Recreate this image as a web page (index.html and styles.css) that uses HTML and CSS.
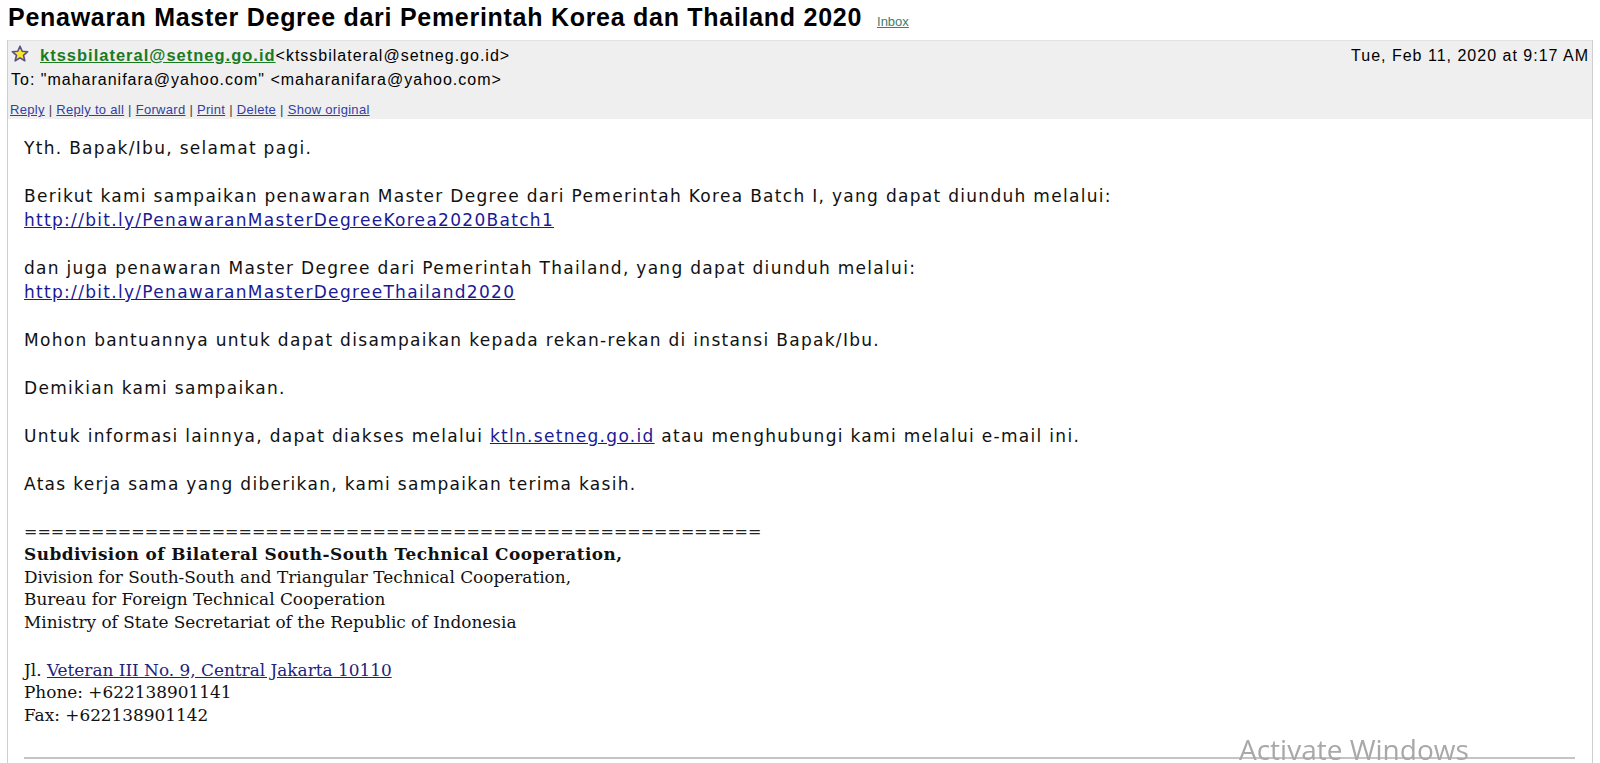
FILE: index.html
```html
<!DOCTYPE html>
<html lang="id">
<head>
<meta charset="utf-8">
<title>Penawaran Master Degree dari Pemerintah Korea dan Thailand 2020</title>
<link rel="stylesheet" href="styles.css">
</head>
<body>
<div class="page">
  <div class="subject">
    <h1 class="subject-title">Penawaran Master Degree dari Pemerintah Korea dan Thailand 2020</h1>
    <a class="label" href="#">Inbox</a>
  </div>
  <div class="message">
    <div class="msg-head">
      <div class="row-from">
        <div class="from">
          <svg class="star" viewBox="0 0 18 18" width="18" height="18" aria-hidden="true">
            <path d="M9 1.2 L11.2 6.3 L16.7 6.7 L12.5 10.3 L13.8 15.8 L9 12.9 L4.2 15.8 L5.5 10.3 L1.3 6.7 L6.8 6.3 Z" fill="#f6e632" stroke="#5a4d8c" stroke-width="1.6" stroke-linejoin="round"/>
          </svg>
          <a class="sender" href="#">ktssbilateral@setneg.go.id</a><span class="addr">&lt;ktssbilateral@setneg.go.id&gt;</span>
        </div>
        <div class="date">Tue, Feb 11, 2020 at 9:17 AM</div>
      </div>
      <div class="row-to">To: "maharanifara@yahoo.com" &lt;maharanifara@yahoo.com&gt;</div>
      <div class="actions">
        <a href="#">Reply</a> | <a href="#">Reply to all</a> | <a href="#">Forward</a> | <a href="#">Print</a> | <a href="#">Delete</a> | <a href="#">Show original</a>
      </div>
    </div>
    <div class="msg-body">
      <p>Yth. Bapak/Ibu, selamat pagi.</p>
      <p>Berikut kami sampaikan penawaran Master Degree dari Pemerintah Korea Batch I, yang dapat diunduh melalui:<br><a href="#">http://bit.ly/PenawaranMasterDegreeKorea2020Batch1</a></p>
      <p>dan juga penawaran Master Degree dari Pemerintah Thailand, yang dapat diunduh melalui:<br><a href="#">http://bit.ly/PenawaranMasterDegreeThailand2020</a></p>
      <p>Mohon bantuannya untuk dapat disampaikan kepada rekan-rekan di instansi Bapak/Ibu.</p>
      <p>Demikian kami sampaikan.</p>
      <p>Untuk informasi lainnya, dapat diakses melalui <a href="#">ktln.setneg.go.id</a> atau menghubungi kami melalui e-mail ini.</p>
      <p>Atas kerja sama yang diberikan, kami sampaikan terima kasih.</p>
      <div class="rule-text">=======================================================</div>
      <div class="sig">
        <div class="sig-strong">Subdivision of Bilateral South-South Technical Cooperation,</div>
        <div>Division for South-South and Triangular Technical Cooperation,</div>
        <div>Bureau for Foreign Technical Cooperation</div>
        <div>Ministry of State Secretariat of the Republic of Indonesia</div>
        <div class="sig-gap">Jl. <a href="#">Veteran III No. 9, Central Jakarta 10110</a></div>
        <div>Phone: +622138901141</div>
        <div>Fax: +622138901142</div>
      </div>
      <hr class="end-rule">
    </div>
  </div>
</div>
<div class="watermark">Activate Windows</div>
</body>
</html>
```
FILE: styles.css
```css
html, body {
  margin: 0;
  padding: 0;
  background: #ffffff;
  overflow: hidden;
}

body {
  width: 1600px;
  height: 763px;
  font-family: "Liberation Sans", Arial, sans-serif;
  color: #000;
}

.subject {
  height: 40px;
  box-sizing: border-box;
  padding: 3px 0 0 8px;
  display: flex;
  align-items: baseline;
}

.subject-title {
  margin: 0;
  font-size: 25px;
  line-height: 29px;
  letter-spacing: 0.72px;
  font-weight: bold;
  color: #000;
}

.label {
  margin-left: 15px;
  font-size: 13px;
  color: #3d7d69;
  text-decoration: underline;
}

.message {
  margin-left: 7px;
  width: 1586px;
  box-sizing: border-box;
  border-left: 1px solid #cfcfcf;
  border-right: 1px solid #cfcfcf;
  height: 723px;
}

.msg-head {
  background: #efefef;
  border-top: 1px solid #e2e2e2;
  height: 79px;
  box-sizing: border-box;
  padding: 3px 3px 0 2px;
}

.row-from {
  display: flex;
  justify-content: space-between;
  align-items: baseline;
  height: 25px;
}

.from {
  display: flex;
  align-items: baseline;
}

.star {
  align-self: flex-start;
  margin: 1px 11px 0 1px;
}

.sender {
  font-size: 16.5px;
  letter-spacing: 1px;
  font-weight: bold;
  color: #1b7a24;
  text-decoration: underline;
  line-height: 22px;
}

.addr {
  font-size: 16px;
  letter-spacing: 1px;
  line-height: 22px;
}

.date {
  font-size: 16px;
  letter-spacing: 1px;
  line-height: 22px;
}

.row-to {
  font-size: 16px;
  letter-spacing: 1px;
  line-height: 22px;
  padding-left: 1px;
}

.actions {
  margin-top: 11px;
  font-size: 13px;
  letter-spacing: 0.3px;
  line-height: 16px;
  color: #444;
}

.actions a {
  color: #3340a3;
  text-decoration: underline;
}

.msg-body {
  padding: 17px 0 0 16px;
  font-family: "DejaVu Sans", Verdana, sans-serif;
  font-size: 17px;
  letter-spacing: 1.3px;
  line-height: 24px;
  color: #111;
}

.msg-body p {
  margin: 0 0 24px 0;
}

.msg-body a {
  color: #1a1a94;
  text-decoration: underline;
}

.rule-text {
  font-size: 16px;
  letter-spacing: 0;
  line-height: 23px;
  color: #222;
}

.sig {
  font-family: "DejaVu Serif", "Liberation Serif", serif;
  font-size: 16.9px;
  letter-spacing: 0;
  line-height: 22.7px;
  color: #111;
}

.sig-strong {
  font-weight: bold;
  letter-spacing: 0.45px;
}

.sig-gap {
  margin-top: 24.7px;
}

.sig a {
  color: #1f237a;
}

.end-rule {
  margin: 30px 0 0 0;
  width: 1551px;
  border: 0;
  border-top: 2px solid #c4c4c4;
  height: 0;
}

.watermark {
  position: fixed;
  left: 1239px;
  top: 735px;
  font-family: "Open Sans", "Noto Sans", sans-serif;
  font-size: 28px;
  line-height: 28px;
  color: #a8a8a8;
  pointer-events: none;
}
```
